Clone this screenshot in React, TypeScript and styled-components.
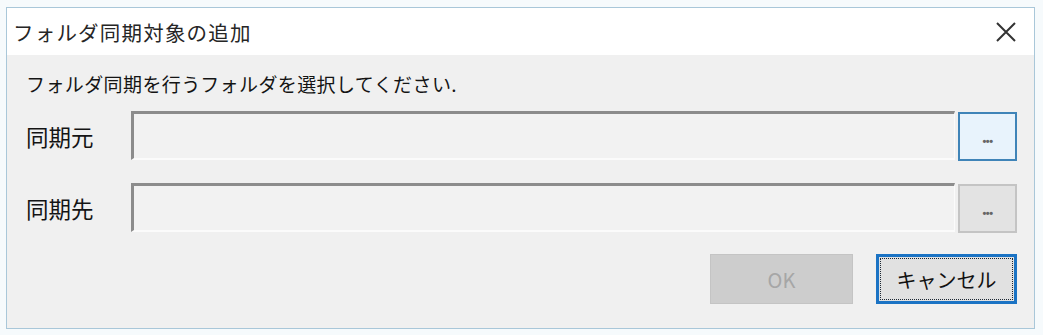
import React from "react";
import styled, { createGlobalStyle } from "styled-components";

const Global = createGlobalStyle`
  html, body {
    margin: 0;
    padding: 0;
    background: #f6fafc;
  }
  body {
    font-family: "Noto Sans CJK JP", "Noto Sans", sans-serif;
    color: #111;
  }
`;

const Page = styled.div`
  padding: 7px 8px 6px 6px;
  width: 1043px;
  height: 335px;
  box-sizing: border-box;
`;

const Window = styled.div`
  box-sizing: border-box;
  height: 322px;
  border: 1px solid #a9c7d9;
  display: flex;
  flex-direction: column;
  background: #f0f0f0;
`;

const TitleBar = styled.div`
  height: 49px;
  background: #ffffff;
  display: flex;
  align-items: center;
  justify-content: space-between;
  padding: 0 16px 0 6px;
`;

const Title = styled.span`
  font-size: 20.5px;
  line-height: 24px;
  color: #262626;
  letter-spacing: 1.2px;
`;

const Close = styled.button`
  width: 24px;
  height: 24px;
  border: none;
  background: transparent;
  padding: 0;
  display: flex;
  align-items: center;
  justify-content: center;
`;

const Body = styled.div`
  flex: 1;
  display: flex;
  flex-direction: column;
  padding: 17px 17px 24px 19px;
`;

const Instruction = styled.div`
  font-size: 19px;
  line-height: 24px;
  color: #141414;
  margin-bottom: 14px;
  letter-spacing: 0.4px;
`;

const Row = styled.div<{ $mt?: number }>`
  display: flex;
  align-items: center;
  margin-top: ${(p) => p.$mt ?? 0}px;
`;

const Label = styled.span`
  width: 105px;
  font-size: 22.5px;
  line-height: 26px;
  color: #141414;
  padding-top: 1px;
`;

const PathBox = styled.div`
  box-sizing: border-box;
  width: 824px;
  height: 49px;
  background: #f2f2f2;
  border-top: 3px solid #8c8c8c;
  border-left: 3px solid #8c8c8c;
  border-right: 1px solid #fbfbfb;
  border-bottom: 2px solid #fbfbfb;
`;

const Browse = styled.button<{ $hot?: boolean }>`
  box-sizing: border-box;
  margin-left: 3px;
  width: 59px;
  height: 49px;
  margin-top: 2px;
  border: 2px solid ${(p) => (p.$hot ? "#3f84b8" : "#c4c4c4")};
  background: ${(p) => (p.$hot ? "#e8f3fc" : "#e3e3e3")};
  color: #666;
  font-size: 11px;
  line-height: 1;
  font-family: "Liberation Sans", sans-serif;
  font-weight: bold;
  padding: 10px 0 0;
  letter-spacing: -0.5px;
`;

const Footer = styled.div`
  display: flex;
  justify-content: flex-end;
  gap: 23px;
  margin-top: 21px;
`;

const DialogButton = styled.button<{ $focused?: boolean; $disabled?: boolean }>`
  box-sizing: border-box;
  height: 50px;
  width: ${(p) => (p.$focused ? 141 : 143)}px;
  font-family: "Noto Sans CJK JP", "Noto Sans", sans-serif;
  font-size: 20px;
  padding: 0;
  color: ${(p) => (p.$disabled ? "#a6a6a6" : "#111")};
  background: ${(p) => (p.$disabled ? "#cdcdcd" : "#e1e1e1")};
  border: ${(p) => (p.$focused ? "3px solid #1b73c4" : "1px solid #c4c4c4")};
  outline: ${(p) => (p.$focused ? "1px dotted #1d2733" : "none")};
  outline-offset: -5px;
`;

export default function App() {
  return (
    <>
      <Global />
      <Page>
        <Window>
          <TitleBar>
            <Title>フォルダ同期対象の追加</Title>
            <Close aria-label="close">
              <svg width="22" height="22" viewBox="0 0 22 22">
                <path d="M2 2 L20 20 M20 2 L2 20" stroke="#333" strokeWidth="2" />
              </svg>
            </Close>
          </TitleBar>
          <Body>
            <Instruction>フォルダ同期を行うフォルダを選択してください.</Instruction>
            <Row>
              <Label>同期元</Label>
              <PathBox />
              <Browse $hot>•••</Browse>
            </Row>
            <Row $mt={21}>
              <Label>同期先</Label>
              <PathBox />
              <Browse>•••</Browse>
            </Row>
            <Footer>
              <DialogButton $disabled>OK</DialogButton>
              <DialogButton $focused>キャンセル</DialogButton>
            </Footer>
          </Body>
        </Window>
      </Page>
    </>
  );
}
